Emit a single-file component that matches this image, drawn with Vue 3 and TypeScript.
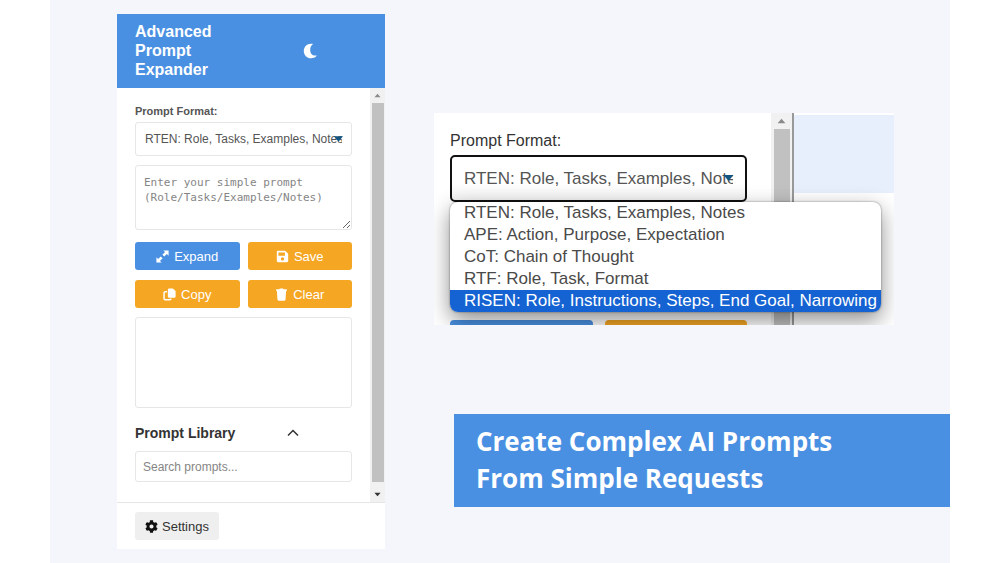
<script setup lang="ts">
import { ref } from 'vue'

interface Format {
  id: string
  label: string
}

const formats: Format[] = [
  { id: 'rten', label: 'RTEN: Role, Tasks, Examples, Notes' },
  { id: 'ape', label: 'APE: Action, Purpose, Expectation' },
  { id: 'cot', label: 'CoT: Chain of Thought' },
  { id: 'rtf', label: 'RTF: Role, Task, Format' },
  { id: 'risen', label: 'RISEN: Role, Instructions, Steps, End Goal, Narrowing' },
]

const format = ref('rten')
const shownFormat = ref('rten')
const highlighted = ref('risen')
const prompt = ref('')
const search = ref('')
</script>

<template>
  <main class="stage">
    <section class="panel">
      <header class="panel-header">
        <h1>Advanced Prompt Expander</h1>
        <button class="plain" type="button" aria-label="Toggle dark mode">
          <svg class="moon" viewBox="0 0 14 16" aria-hidden="true">
            <path d="M8 .7C3.800.7.8 3.900.8 8s3 7.300 7.200 7.300c2.200 0 4.200-.7 5.500-2.200.3-.3 0-.7-.4-.6C9.400 13 7.200 10.500 7.200 7c0-2.300.7-4.300 2.400-5.500.3-.2.2-.6-.1-.7C9 .7 8.500.7 8 .7z" />
          </svg>
        </button>
      </header>

      <div class="panel-main">
        <div class="content">
          <label class="label" for="format">Prompt Format:</label>
          <div class="select-wrap">
            <select id="format" v-model="format" class="field">
              <option v-for="f in formats" :key="f.id" :value="f.id">{{ f.label }}</option>
            </select>
            <svg class="caret" viewBox="0 0 10 8" aria-hidden="true"><path d="M0 1h10L5 7z" /></svg>
          </div>
          <textarea
            v-model="prompt"
            class="field prompt"
            aria-label="Prompt"
            placeholder="Enter your simple prompt (Role/Tasks/Examples/Notes)"
          ></textarea>

          <div class="actions">
            <button class="btn primary" type="button">
              <svg viewBox="0 0 16 16" aria-hidden="true">
                <path d="M9 .5h6.500V7l-2.100-2.100-3.300 3.200-2.200-2.200 3.200-3.300zM7 15.500H.5V9l2.100 2.100 3.300-3.200 2.200 2.200-3.200 3.300z" />
              </svg>
              Expand
            </button>
            <button class="btn" type="button">
              <svg viewBox="0 0 448 512" aria-hidden="true">
                <path d="M433.941 129.941l-83.882-83.882A48 48 0 0 0 316.118 32H48C21.490 32 0 53.490 0 80v352c0 26.510 21.490 48 48 48h352c26.510 0 48-21.490 48-48V163.882a48 48 0 0 0-14.059-33.941zM224 416c-35.346 0-64-28.654-64-64 0-35.346 28.654-64 64-64s64 28.654 64 64c0 35.346-28.654 64-64 64zm96-304.520V212c0 6.627-5.373 12-12 12H76c-6.627 0-12-5.373-12-12V108c0-6.627 5.373-12 12-12h228.520c3.183 0 6.235 1.264 8.485 3.515l3.480 3.480A11.996 11.996 0 0 1 320 111.480z" />
              </svg>
              Save
            </button>
            <button class="btn" type="button">
              <svg viewBox="0 0 16 16" aria-hidden="true">
                <path d="M7.500 .5h4.700L15.500 3.800V10.500a1.500 1.500 0 0 1-1.500 1.500H7.500A1.500 1.500 0 0 1 6 10.500v-8.500A1.500 1.500 0 0 1 7.500 .5z" />
                <path d="M5 4.500H2.500a1.200 1.200 0 0 0-1.200 1.200v7.600a1.200 1.200 0 0 0 1.200 1.200H8.500a1.200 1.200 0 0 0 1.200-1.200V13" fill="none" stroke="currentColor" stroke-width="1.800" />
              </svg>
              Copy
            </button>
            <button class="btn" type="button">
              <svg viewBox="0 0 14 16" aria-hidden="true">
                <path d="M0.500 1.500h3.800L5 .5h4l.7 1h3.800v2.200l-.9.3L12 14.300a1.500 1.500 0 0 1-1.500 1.300h-7A1.500 1.500 0 0 1 2 14.300L1.400 4l-.9-.3z" />
              </svg>
              Clear
            </button>
          </div>

          <output class="field result" aria-label="Expanded prompt"></output>

          <div class="library">
            <h2>Prompt Library</h2>
            <button class="plain" type="button" aria-label="Collapse prompt library">
              <svg class="chevron" viewBox="0 0 12 8" aria-hidden="true"><path d="M1 6.500L6 1.500l5 5" /></svg>
            </button>
          </div>
          <input v-model="search" class="field search" type="text" aria-label="Search prompts" placeholder="Search prompts..." />
        </div>

        <div class="scrollbar" aria-hidden="true">
          <svg class="arrow" viewBox="0 0 8 5"><path d="M0.500 4.500L4 .5l3.500 4z" /></svg>
          <span class="thumb"></span>
          <svg class="arrow dark" viewBox="0 0 8 5"><path d="M0.500.5h7L4 4.500z" /></svg>
        </div>
      </div>

      <footer class="panel-footer">
        <button class="settings" type="button">
          <svg viewBox="0 0 512 512" aria-hidden="true">
            <path d="M487.400 315.700l-42.600-24.600c4.300-23.200 4.300-47 0-70.200l42.600-24.600c4.900-2.800 7.100-8.600 5.500-14-11.100-35.600-30-67.800-54.700-94.600-3.800-4.100-10-5.100-14.800-2.300L380.800 110c-17.900-15.400-38.500-27.300-60.800-35.100V25.800c0-5.600-3.900-10.500-9.400-11.700-36.700-8.200-74.300-7.800-109.200 0-5.500 1.200-9.400 6.100-9.400 11.700V75c-22.200 7.900-42.800 19.800-60.800 35.100L88.700 85.500c-4.900-2.800-11-1.900-14.800 2.300-24.700 26.700-43.600 58.900-54.700 94.600-1.700 5.400.6 11.200 5.500 14L67.300 221c-4.300 23.200-4.300 47 0 70.200l-42.600 24.600c-4.900 2.800-7.100 8.600-5.500 14 11.100 35.600 30 67.800 54.700 94.600 3.800 4.100 10 5.100 14.800 2.300l42.600-24.600c17.900 15.400 38.500 27.300 60.800 35.100v49.200c0 5.600 3.900 10.500 9.400 11.700 36.700 8.200 74.300 7.800 109.200 0 5.500-1.200 9.400-6.100 9.400-11.700v-49.200c22.200-7.900 42.800-19.800 60.800-35.100l42.600 24.600c4.900 2.800 11 1.900 14.800-2.300 24.700-26.700 43.600-58.900 54.700-94.600 1.500-5.500-.7-11.300-5.600-14.100zM256 336c-44.100 0-80-35.900-80-80s35.900-80 80-80 80 35.900 80 80-35.900 80-80 80z" />
          </svg>
          Settings
        </button>
      </footer>
    </section>

    <div class="showcase">
      <section class="closeup">
        <div class="closeup-main">
          <label class="big-label" for="format-large">Prompt Format:</label>
          <div class="select-wrap">
            <select id="format-large" v-model="shownFormat" class="big-select">
              <option v-for="f in formats" :key="f.id" :value="f.id">{{ f.label }}</option>
            </select>
            <svg class="caret big-caret" viewBox="0 0 10 8" aria-hidden="true"><path d="M0 1h10L5 7z" /></svg>
            <ul class="menu" role="listbox" aria-label="Prompt formats">
              <li
                v-for="f in formats"
                :key="f.id"
                role="option"
                :aria-selected="f.id === highlighted"
                :class="{ active: f.id === highlighted }"
                @mouseenter="highlighted = f.id"
              >
                {{ f.label }}
              </li>
            </ul>
          </div>
          <div class="stubs" aria-hidden="true">
            <span class="stub blue"></span>
            <span class="stub orange"></span>
          </div>
        </div>
        <div class="scrollbar wide" aria-hidden="true">
          <svg class="arrow" viewBox="0 0 8 5"><path d="M0.500 4.500L4 .5l3.500 4z" /></svg>
          <span class="thumb"></span>
        </div>
        <div class="backdrop" aria-hidden="true"><span class="tint"></span></div>
      </section>

      <p class="banner">Create Complex AI Prompts<br />From Simple Requests</p>
    </div>
  </main>
</template>

<style>
body {
  margin: 0;
  background: #fff;
}
</style>

<style scoped>
* {
  box-sizing: border-box;
}

.stage {
  display: grid;
  grid-template-columns: 268fr 516fr;
  gap: 49px;
  align-items: start;
  min-height: 100vh;
  margin: 0 5%;
  padding: 14px 0 14px 67px;
  background: #f4f6fb;
  color: #333;
  font-family: "Liberation Sans", Arial, sans-serif;
}

button,
input,
select {
  font-family: inherit;
}

h1,
h2,
p,
ul {
  margin: 0;
  padding: 0;
}

svg {
  display: block;
  fill: currentColor;
}

.plain {
  padding: 0;
  border: 0;
  background: none;
  color: inherit;
}

.panel {
  background: #fff;
}

.panel-header {
  display: flex;
  align-items: center;
  justify-content: space-between;
  padding: 8px 68px 9px 18px;
  background: #4a90e2;
  color: #fff;
}

.panel-header h1 {
  width: 100px;
  font-size: 16px;
  line-height: 19px;
}

.moon {
  width: 14px;
  height: 16px;
}

.panel-main {
  display: flex;
}

.content {
  flex: 1;
  min-width: 0;
  padding: 15px 18px 20px;
}

.label {
  display: block;
  margin-bottom: 3px;
  color: #555;
  font-size: 11px;
  font-weight: 700;
  line-height: 16px;
}

.select-wrap {
  position: relative;
}

.field {
  display: block;
  width: 100%;
  border: 1px solid #e6e6e6;
  border-radius: 3px;
  background: #fff;
  color: #555;
  font-size: 12px;
  outline: none;
}

select {
  appearance: none;
}

select.field {
  height: 34px;
  padding: 0 9px;
}

.caret {
  position: absolute;
  top: 13px;
  right: 9px;
  width: 9px;
  height: 8px;
  color: #12557f;
}

.prompt {
  height: 65px;
  margin-top: 9px;
  padding: 9px 8px;
  font-family: "DejaVu Sans Mono", monospace;
  font-size: 11px;
  line-height: 15px;
  resize: vertical;
}

.field::placeholder {
  color: #858585;
}

.actions {
  display: grid;
  grid-template-columns: 1fr 1fr;
  gap: 10px 8px;
  margin: 12px 0 9px;
}

.btn {
  display: flex;
  align-items: center;
  justify-content: center;
  gap: 5px;
  height: 28px;
  padding: 0;
  border: 0;
  border-radius: 3px;
  background: #f5a623;
  color: #fff;
  font-size: 13px;
}

.btn.primary {
  background: #4a90e2;
}

.btn svg {
  width: 13px;
  height: 13px;
}

.result {
  height: 91px;
}

.library {
  display: flex;
  align-items: center;
  justify-content: space-between;
  margin: 15px 0 8px;
  padding-right: 53px;
}

.library h2 {
  color: #333;
  font-size: 14px;
  line-height: 20px;
}

.chevron {
  width: 12px;
  height: 8px;
  fill: none;
  stroke: #333;
  stroke-width: 1.5;
}

.search {
  height: 31px;
  padding: 0 7px;
}

.scrollbar {
  display: flex;
  flex-direction: column;
  align-items: center;
  gap: 5px;
  width: 15px;
  padding: 5px 0;
  background: #f1f1f1;
}

.arrow {
  width: 7px;
  height: 5px;
  color: #8a8a8a;
}

.arrow.dark {
  margin-top: 5px;
  color: #333;
}

.thumb {
  flex: 1;
  width: 12px;
  background: #c1c1c1;
}

.panel-footer {
  padding: 9px 18px;
  border-top: 1px solid #e6e6e6;
}

.settings {
  display: flex;
  align-items: center;
  gap: 4px;
  height: 28px;
  padding: 0 10px;
  border: 0;
  border-radius: 3px;
  background: #efefef;
  color: #333;
  font-size: 13px;
}

.settings svg {
  width: 13px;
  height: 13px;
  color: #111;
}

.showcase {
  display: flex;
  flex-direction: column;
  gap: 89px;
  padding-top: 99px;
}

.closeup {
  display: flex;
  height: 212px;
  margin-right: 56px;
  overflow: hidden;
  background: #fff;
}

.closeup-main {
  flex: 1;
  padding: 18px 24px 0 16px;
}

.big-label {
  display: block;
  margin-bottom: 4px;
  color: #333;
  font-size: 16px;
  line-height: 20px;
}

.big-select {
  display: block;
  width: 100%;
  height: 47px;
  padding: 0 12px;
  border: 2px solid #111;
  border-radius: 5px;
  background: linear-gradient(#fff 60%, #f3f3f3);
  color: #555;
  font-size: 17px;
  outline: none;
}

.big-caret {
  top: 19px;
  right: 13px;
  width: 11px;
}

.menu {
  position: absolute;
  top: 47px;
  left: 0;
  z-index: 1;
  overflow: hidden;
  border-radius: 8px;
  background: #fff;
  box-shadow: 0 0 2px rgba(0, 0, 0, 0.5), 0 8px 22px rgba(0, 0, 0, 0.45);
  color: #4a4a4a;
  font-size: 17px;
  line-height: 22px;
  list-style: none;
  white-space: nowrap;
}

.menu li {
  padding: 0 4px 0 14px;
}

.menu .active {
  background: #1563d2;
  color: #fff;
}

.stubs {
  display: grid;
  grid-template-columns: 1fr 1fr;
  gap: 12px;
  margin-top: 118px;
}

.stub {
  height: 40px;
  border-radius: 4px;
}

.blue {
  background: #4a90e2;
}

.orange {
  background: #f5a623;
}

.scrollbar.wide {
  width: 21px;
  padding-bottom: 0;
}

.wide .arrow {
  width: 9px;
  height: 6px;
}

.wide .thumb {
  width: 16px;
}

.backdrop {
  width: 102px;
  padding-top: 2px;
  border-left: 2px solid #999;
}

.tint {
  display: block;
  height: 78px;
  background: #e7effd;
}

.banner {
  margin-left: 20px;
  padding: 9px 22px 10px;
  background: #4a90e2;
  color: #fff;
  font-family: "Open Sans", "Noto Sans", sans-serif;
  font-size: 26px;
  font-weight: 700;
  line-height: 37px;
}
</style>
